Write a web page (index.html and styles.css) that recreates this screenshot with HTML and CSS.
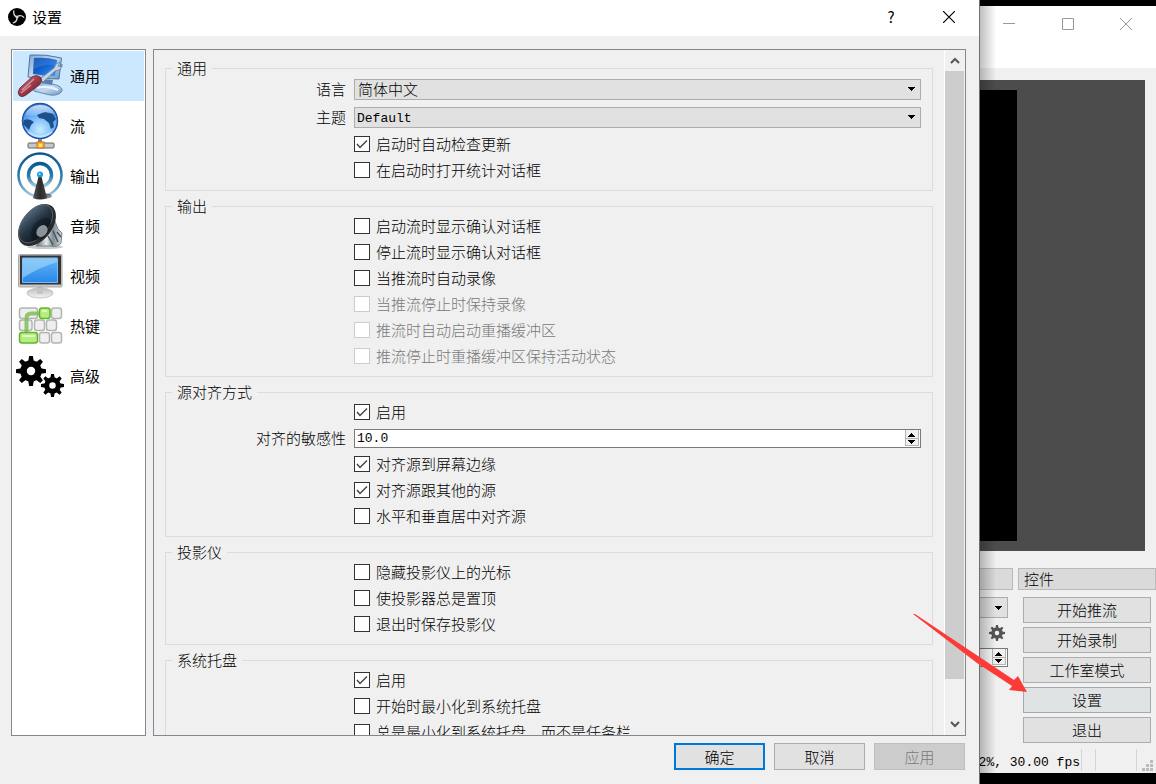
FILE: index.html
```html
<!DOCTYPE html>
<html lang="zh-CN">
<head>
    <meta charset="UTF-8">
    <meta name="viewport" content="width=device-width, initial-scale=1.0">
    <title>设置</title>
    <link rel="stylesheet" href="styles.css">
</head>
<body>
    <!-- shared symbols -->
    <svg class="symbols" aria-hidden="true">
        <symbol id="gear" viewBox="-16 -16 32 32">
            <circle r="8" fill="none" stroke="currentColor" stroke-width="7"/>
            <g fill="currentColor">
                <path d="M-3-10L-2-16H2L3-10ZM-3 10L-2 16H2L3 10Z"/>
                <path transform="rotate(45)" d="M-3-10L-2-16H2L3-10ZM-3 10L-2 16H2L3 10Z"/>
                <path transform="rotate(90)" d="M-3-10L-2-16H2L3-10ZM-3 10L-2 16H2L3 10Z"/>
                <path transform="rotate(135)" d="M-3-10L-2-16H2L3-10ZM-3 10L-2 16H2L3 10Z"/>
            </g>
        </symbol>
        <symbol id="spin" viewBox="0 0 16 17">
            <rect x="1" width="14" height="16" fill="#f0f0f0"/>
            <path d="M1.5 0V16M14.5 0V16M1 8.500H15M1 15.500H15" stroke="#b4b4b4"/>
            <path d="M7 3h1v1h1v1h1v1h1v1H4V6h1V5h1V4h1zM4 10h7v1h-1v1H9v1H8v1H7v-1H6v-1H5v-1H4z" fill="#000"/>
        </symbol>
    </svg>

    <div class="dialog">
        <header class="titlebar">
            <svg class="logo" viewBox="0 0 18 18">
                <circle cx="9" cy="9" r="9" fill="#000"/>
                <g fill="none" stroke="#d8d8d8" stroke-width="1.300" stroke-linecap="round">
                    <path d="M9 9Q5 7.500 5.800 3"/>
                    <path transform="rotate(120 9 9)" d="M9 9Q5 7.500 5.800 3"/>
                    <path transform="rotate(240 9 9)" d="M9 9Q5 7.500 5.800 3"/>
                </g>
                <circle cx="9" cy="9" r="1.500" fill="#d8d8d8"/>
            </svg>
            <h1 class="title">设置</h1>
            <button class="window-btn" type="button" aria-label="帮助">?</button>
            <button class="window-btn" type="button" aria-label="关闭">
                <svg width="12" height="12" viewBox="0 0 12 12"><path d="M0 0L12 12M12 0L0 12" stroke="#000" stroke-width="1.200"/></svg>
            </button>
        </header>

        <div class="dialog-body">
            <nav class="sidebar">
                <a href="#general" class="nav-item active">
                    <svg class="nav-icon" viewBox="0 0 48 48">
                        <defs>
                            <linearGradient id="screen1" x2="1" y2="1"><stop stop-color="#0a3f9e"/><stop offset=".5" stop-color="#1262cf"/><stop offset="1" stop-color="#3a9cf4"/></linearGradient>
                            <linearGradient id="case" x2="1" y2="1"><stop stop-color="#7fa6d0"/><stop offset=".5" stop-color="#c2d9ef"/><stop offset="1" stop-color="#6f93bd"/></linearGradient>
                            <linearGradient id="handle" x2="1" y2="1"><stop stop-color="#d98b93"/><stop offset=".5" stop-color="#9c3a48"/><stop offset="1" stop-color="#5e1c2a"/></linearGradient>
                        </defs>
                        <path d="M19 32Q30 29 36 32Q47 34 46 39Q43 44 34 43L18 39Q16 35 19 32Z" fill="url(#case)" stroke="#6386b0"/>
                        <path d="M21 36Q31 33 42 38" fill="none" stroke="#eaf4ff" stroke-width="2"/>
                        <path d="M26 27L37 28L36 33L26 31Z" fill="#5d7fab"/>
                        <path d="M14 3Q30 2 45.500 6L43 27Q28 27 12 25Z" fill="url(#case)" stroke="#4f74a3"/>
                        <path d="M18 6Q30 5 41 8L39 24Q28 24 17 22Z" fill="url(#screen1)"/>
                        <path d="M18 6Q30 5 41 8L40 13Q29 12 18 17Z" fill="#6db0f4" opacity=".25"/>
                        <path d="M24 27L38 16L40 12L44 10L42 14L45 15L46 12L46 15L43 18L39 19L27 30Z" fill="#c4d5e6" stroke="#6a86a6" stroke-width=".8"/>
                        <path d="M4 36L16 25Q21 22 25 26Q27 29 23 33L10 43Q5 46 3 43Q1 40 4 36Z" fill="url(#handle)" stroke="#792a38"/>
                        <path d="M6 38L18 27M5 41L15 33" stroke="#e6a5aa" stroke-width="1.500" opacity=".8"/>
                    </svg>
                    <span>通用</span>
                </a>
                <a href="#stream" class="nav-item">
                    <svg class="nav-icon" viewBox="0 0 48 48">
                        <defs>
                            <radialGradient id="globe" cx=".5" cy=".75" r=".8"><stop stop-color="#c8ecff"/><stop offset=".5" stop-color="#6fb6fa"/><stop offset="1" stop-color="#3474d8"/></radialGradient>
                            <linearGradient id="shine" y2="1" x2="0"><stop stop-color="#fff"/><stop offset="1" stop-color="#fff" stop-opacity=".2"/></linearGradient>
                        </defs>
                        <path d="M22 36h4v5h-4z" fill="#8a8a8a"/>
                        <rect x="12" y="41" width="26" height="5" rx="1" fill="#c5c7ca" stroke="#65676c"/>
                        <rect x="21" y="40" width="7" height="6" fill="#ffb82e" stroke="#d36f16"/>
                        <rect x="23" y="42" width="3" height="3" fill="#ffe680"/>
                        <circle cx="24" cy="19" r="17.500" fill="url(#globe)" stroke="#2356a8" stroke-width="1.500"/>
                        <path d="M8 18Q13 16 18 20L15 23L13 28L10 25L7 22ZM21 13L29 10L37 12L40 17L37 20L38 25L35 27L33 21L28 17L23 16Z" fill="#1d4f8a"/>
                        <path d="M9 13Q13 3 24 3Q35 3 39 12Q30 9 25 11Q18 15 9 13Z" fill="url(#shine)" opacity=".75"/>
                        <path d="M12 30Q24 39 36 30" fill="none" stroke="#d5f0ff" stroke-width="2" opacity=".7"/>
                    </svg>
                    <span>流</span>
                </a>
                <a href="#output" class="nav-item">
                    <svg class="nav-icon" viewBox="0 0 48 48">
                        <defs>
                            <linearGradient id="wave" x2="0" y2="1"><stop stop-color="#075a91"/><stop offset=".55" stop-color="#2f7dac"/><stop offset="1" stop-color="#a5cce2"/></linearGradient>
                            <linearGradient id="cone"><stop stop-color="#555"/><stop offset=".5" stop-color="#2b2b2b"/><stop offset="1" stop-color="#444"/></linearGradient>
                        </defs>
                        <circle cx="24" cy="23" r="21.500" fill="#fff" stroke="url(#wave)" stroke-width="2.500"/>
                        <circle cx="24" cy="23" r="11.500" fill="none" stroke="url(#wave)" stroke-width="3.500"/>
                        <ellipse cx="27" cy="44" rx="9" ry="3" fill="#222" opacity=".5"/>
                        <path d="M23 23h2L31 46Q24 49 17 46Z" fill="url(#cone)"/>
                        <circle cx="24" cy="22.500" r="3" fill="#1897e8"/>
                        <circle cx="23.500" cy="22" r="1.200" fill="#8bd5ff"/>
                    </svg>
                    <span>输出</span>
                </a>
                <a href="#audio" class="nav-item">
                    <svg class="nav-icon" viewBox="0 0 48 48">
                        <defs>
                            <linearGradient id="horn" x1="0" y1=".4" x2="1" y2=".7"><stop stop-color="#54697b"/><stop offset=".45" stop-color="#263746"/><stop offset="1" stop-color="#0d141c"/></linearGradient>
                            <linearGradient id="chrome"><stop stop-color="#59636a"/><stop offset=".4" stop-color="#e5eaec"/><stop offset=".65" stop-color="#7c8a90"/><stop offset="1" stop-color="#d3dcde"/></linearGradient>
                        </defs>
                        <ellipse cx="29" cy="45" rx="18" ry="2" fill="#777" opacity=".4"/>
                        <path d="M38 17L42 27L46 31L45 41Q42 46 34 44L20 44Z" fill="url(#chrome)" stroke="#788389"/>
                        <path d="M32 34L37 43M37 29L42 40M41 30L45 35" stroke="#46565d" stroke-width="1.500"/>
                        <ellipse cx="21" cy="23" rx="15" ry="24" transform="rotate(38 21 23)" fill="#2b2b2d"/>
                        <ellipse cx="19.500" cy="22" rx="13" ry="22" transform="rotate(38 20 22)" fill="url(#horn)" stroke="#67717a" stroke-width=".7"/>
                        <ellipse cx="25" cy="27" rx="8" ry="13" transform="rotate(38 25 27)" fill="#0b1118" opacity=".45"/>
                        <ellipse cx="26" cy="29" rx="5" ry="6.500" transform="rotate(38 26 29)" fill="#8b9299"/>
                    </svg>
                    <span>音频</span>
                </a>
                <a href="#video" class="nav-item">
                    <svg class="nav-icon" viewBox="0 0 48 48">
                        <defs>
                            <linearGradient id="screen2" x2="0" y2="1"><stop stop-color="#65b5f4"/><stop offset="1" stop-color="#2588ea"/></linearGradient>
                            <linearGradient id="stand" x2="0" y2="1"><stop stop-color="#bbb"/><stop offset="1" stop-color="#f4f4f4"/></linearGradient>
                        </defs>
                        <ellipse cx="24" cy="41" rx="13" ry="5" fill="url(#stand)" stroke="#c6c6c6"/>
                        <path d="M21 34h6v7Q24 43 21 41Z" fill="#c2c2c2"/>
                        <rect x="2.500" y="2.500" width="43.500" height="32.500" rx="1" fill="#c9c9c9" stroke="#aaa"/>
                        <rect x="4" y="3.500" width="41" height="29" fill="#343434"/>
                        <rect x="6.500" y="6" width="35" height="24.500" fill="url(#screen2)"/>
                        <path d="M6.500 6H41.500V10Q24 15 6.500 26Z" fill="#a6d9fb" opacity=".6"/>
                        <path d="M6.500 6H41.500V30.500H6.500Z" fill="none" stroke="#78bdfa"/>
                    </svg>
                    <span>视频</span>
                </a>
                <a href="#hotkeys" class="nav-item">
                    <svg class="nav-icon" viewBox="0 0 48 48">
                        <g fill="#eeefee" stroke="#b2b6b1" stroke-width="1.500">
                            <rect x="3.500" y="6" width="18" height="10.500" rx="2.500"/>
                            <rect x="35.500" y="6" width="10" height="10.500" rx="2.500"/>
                            <rect x="3.500" y="18" width="12.500" height="10.500" rx="2.500"/>
                            <rect x="18.500" y="18" width="10" height="10.500" rx="2.500"/>
                            <rect x="30.500" y="18" width="10" height="10.500" rx="2.500"/>
                            <rect x="23.500" y="30.500" width="10" height="10.500" rx="2.500"/>
                            <rect x="35.500" y="30.500" width="10" height="10.500" rx="2.500"/>
                        </g>
                        <path d="M10.500 31V16Q10.500 11.500 15 11.500H24" fill="none" stroke="#82bd59" stroke-width="4" opacity=".85"/>
                        <g fill="#b5ed80" stroke="#63b62c" stroke-width="1.500">
                            <rect x="23.500" y="6" width="10.500" height="10.500" rx="2.500"/>
                            <rect x="3.500" y="30.500" width="18" height="10.500" rx="2.500"/>
                        </g>
                        <path d="M26 9h5M6 34h13" stroke="#e3ffc8" stroke-width="2"/>
                    </svg>
                    <span>热键</span>
                </a>
                <a href="#advanced" class="nav-item">
                    <svg class="nav-icon" viewBox="0 0 48 48">
                        <use href="#gear" x="0" y="4" width="30" height="30"/>
                        <use href="#gear" x="25" y="22" width="23" height="23"/>
                    </svg>
                    <span>高级</span>
                </a>
            </nav>

            <main class="panel">
                <form class="settings" id="settings-form">
                    <fieldset>
                        <legend>通用</legend>
                        <div class="row row-select">
                            <label for="language">语言</label>
                            <select id="language"><option>简体中文</option></select>
                        </div>
                        <div class="row row-select">
                            <label for="theme">主题</label>
                            <select id="theme" class="latin"><option>Default</option></select>
                        </div>
                        <label class="check"><input type="checkbox" checked>启动时自动检查更新</label>
                        <label class="check"><input type="checkbox">在启动时打开统计对话框</label>
                    </fieldset>
                    <fieldset>
                        <legend>输出</legend>
                        <label class="check"><input type="checkbox">启动流时显示确认对话框</label>
                        <label class="check"><input type="checkbox">停止流时显示确认对话框</label>
                        <label class="check"><input type="checkbox">当推流时自动录像</label>
                        <label class="check disabled"><input type="checkbox" disabled>当推流停止时保持录像</label>
                        <label class="check disabled"><input type="checkbox" disabled>推流时自动启动重播缓冲区</label>
                        <label class="check disabled"><input type="checkbox" disabled>推流停止时重播缓冲区保持活动状态</label>
                    </fieldset>
                    <fieldset>
                        <legend>源对齐方式</legend>
                        <label class="check"><input type="checkbox" checked>启用</label>
                        <div class="row">
                            <label for="sensitivity">对齐的敏感性</label>
                            <div class="spinbox">
                                <input type="text" id="sensitivity" class="latin" value="10.0">
                                <svg width="16" height="17"><use href="#spin"/></svg>
                            </div>
                        </div>
                        <label class="check"><input type="checkbox" checked>对齐源到屏幕边缘</label>
                        <label class="check"><input type="checkbox" checked>对齐源跟其他的源</label>
                        <label class="check"><input type="checkbox">水平和垂直居中对齐源</label>
                    </fieldset>
                    <fieldset>
                        <legend>投影仪</legend>
                        <label class="check"><input type="checkbox">隐藏投影仪上的光标</label>
                        <label class="check"><input type="checkbox">使投影器总是置顶</label>
                        <label class="check"><input type="checkbox">退出时保存投影仪</label>
                    </fieldset>
                    <fieldset>
                        <legend>系统托盘</legend>
                        <label class="check"><input type="checkbox" checked>启用</label>
                        <label class="check"><input type="checkbox">开始时最小化到系统托盘</label>
                        <label class="check"><input type="checkbox">总是最小化到系统托盘，而不是任务栏</label>
                    </fieldset>
                </form>
                <div class="scrollbar">
                    <button type="button" class="scroll-btn" aria-label="向上">
                        <svg width="10" height="7" viewBox="0 0 10 7"><path d="M1 6L5 2L9 6" fill="none" stroke="#555" stroke-width="2"/></svg>
                    </button>
                    <div class="scroll-track"><div class="scroll-thumb"></div></div>
                    <button type="button" class="scroll-btn" aria-label="向下">
                        <svg width="10" height="7" viewBox="0 0 10 7"><path d="M1 1L5 5L9 1" fill="none" stroke="#555" stroke-width="2"/></svg>
                    </button>
                </div>
            </main>
        </div>

        <footer class="dialog-footer">
            <button type="submit" form="settings-form" class="btn btn-default">确定</button>
            <button type="button" class="btn">取消</button>
            <button type="button" class="btn" disabled>应用</button>
        </footer>
    </div>

    <div class="main-window">
        <header class="main-titlebar">
            <button type="button" aria-label="最小化"><svg width="12" height="12"><path d="M0 5.500H12" stroke="#999"/></svg></button>
            <button type="button" aria-label="最大化"><svg width="12" height="12"><path d="M.5.5H11.500V11.500H.5Z" fill="none" stroke="#999"/></svg></button>
            <button type="button" aria-label="关闭"><svg width="12" height="12"><path d="M0 0L12 12M12 0L0 12" stroke="#999"/></svg></button>
        </header>
        <div class="preview"><div class="canvas"></div></div>
        <div class="docks">
            <section class="dock">
                <div class="dock-title"></div>
                <div class="transition">
                    <select aria-label="转场"><option></option></select>
                    <button type="button" class="gear-btn" aria-label="转场属性"><svg width="16" height="16"><use href="#gear"/></svg></button>
                    <div class="spinbox">
                        <input type="text" aria-label="时长">
                        <svg width="16" height="17"><use href="#spin"/></svg>
                    </div>
                </div>
            </section>
            <section class="dock dock-controls">
                <h2 class="dock-title">控件</h2>
                <div class="control-list">
                    <button type="button" class="btn">开始推流</button>
                    <button type="button" class="btn">开始录制</button>
                    <button type="button" class="btn">工作室模式</button>
                    <div class="pointed">
                        <button type="button" class="btn btn-hover">设置</button>
                        <svg class="arrow" width="114" height="78" viewBox="0 0 114 78"><path d="M0 0H2L101 66L105 62L114 78L96 76L99 72L64 49Q30 23 0 0Z" fill="#fc3b39"/></svg>
                    </div>
                    <button type="button" class="btn">退出</button>
                </div>
            </section>
        </div>
        <footer class="statusbar latin">
            <span class="stats">2%, 30.00 fps</span>
            <span class="cell"></span>
            <span class="cell cell-wide"></span>
            <svg class="grip" width="11" height="11" viewBox="0 0 11 11"><path d="M8 0h3v3H8zM4 4h3v3H4zM8 4h3v3H8zM0 8h3v3H0zM4 8h3v3H4zM8 8h3v3H8z" fill="#bbb"/></svg>
        </footer>
    </div>
</body>
</html>
```

FILE: styles.css
```css
:root {
    --bg: #f0f0f0;
    --button: #e1e1e1;
    --border: #adadad;
    --frame: #828790;
    --group: #dcdcdc;
    --accent: #0078d7;
}

* {
    margin: 0;
    padding: 0;
    box-sizing: border-box;
}

body {
    font-family: "Noto Sans CJK SC", sans-serif;
    font-size: 15px;
    font-weight: 300;
    line-height: 20px;
    color: #000;
    background: #000;
    height: 100vh;
    display: flex;
    overflow: hidden;
}

button, input, select {
    font: inherit;
    color: inherit;
}

button {
    border: none;
    background: none;
}

svg {
    display: block;
    flex: none;
}

.symbols {
    position: absolute;
    width: 0;
    height: 0;
}

.latin {
    font-family: "Liberation Mono", monospace;
    font-size: 13px;
    font-weight: 400;
}

/* settings dialog */
.dialog {
    flex: 1;
    min-width: 0;
    display: flex;
    flex-direction: column;
    background: var(--bg);
    border-right: 1px solid #707070;
}

.titlebar {
    height: 36px;
    display: flex;
    align-items: center;
    padding: 0 1px 2px 8px;
    background: #fff;
}

.logo {
    width: 18px;
    height: 18px;
}

.title {
    flex: 1;
    margin-left: 6px;
    font-size: 15px;
    font-weight: 400;
}

.window-btn {
    width: 58px;
    height: 32px;
    display: flex;
    align-items: center;
    justify-content: center;
    font-weight: 400;
}

.dialog-body {
    flex: 1;
    min-height: 0;
    display: flex;
    gap: 7px;
    padding: 13px 13px 0 11px;
}

.sidebar {
    width: 135px;
    flex: none;
    padding: 1px;
    background: #fff;
    border: 1px solid var(--frame);
    font-weight: 400;
}

.nav-item {
    display: flex;
    align-items: center;
    gap: 6px;
    height: 50px;
    padding-left: 3px;
    color: #000;
    text-decoration: none;
}

.nav-item.active {
    background: #cce8ff;
}

.nav-icon {
    width: 48px;
    height: 48px;
}

.panel {
    flex: 1;
    min-width: 0;
    display: flex;
    border: 1px solid var(--frame);
    overflow: hidden;
}

.settings {
    flex: 1;
    min-width: 0;
    padding: 12px 11px 0;
}

fieldset {
    border: 1px solid var(--group);
    padding: 0 11px 7px 0;
    margin-bottom: 9px;
}

legend {
    margin-left: 6px;
    padding: 0 5px;
    line-height: 12px;
    height: 13px;
}

.row {
    display: grid;
    grid-template-columns: 180px 1fr;
    column-gap: 8px;
    align-items: center;
    height: 26px;
}

.row-select {
    height: 28px;
}

.row label {
    text-align: right;
}

select {
    appearance: none;
    width: 100%;
    height: 21px;
    padding: 0 20px 0 3px;
    line-height: 18px;
    border: 1px solid var(--border);
    border-radius: 0;
    background: var(--button) url("data:image/svg+xml,%3Csvg xmlns='http://www.w3.org/2000/svg' width='7' height='4'%3E%3Cpath d='M0 0h7v1H6v1H5v1H4v1H3V3H2V2H1V1H0z'/%3E%3C/svg%3E") no-repeat right 5px center;
}

select.latin {
    padding: 2px 20px 0 2px;
}

.spinbox {
    display: flex;
    height: 19px;
    background: #fff;
    border: 1px solid #7a7a7a;
}

.spinbox input {
    flex: 1;
    min-width: 0;
    padding: 2px 2px 0;
    border: none;
    background: none;
}

.check {
    display: flex;
    align-items: center;
    gap: 6px;
    height: 26px;
    padding-left: 188px;
}

.check input {
    appearance: none;
    flex: none;
    width: 16px;
    height: 16px;
    border: 1px solid #333;
    background: #fff;
}

.check input:checked {
    background: #fff url("data:image/svg+xml,%3Csvg xmlns='http://www.w3.org/2000/svg' width='14' height='14'%3E%3Cpath d='M2 7L5 10.500L12 3.500' fill='none' stroke='%23444' stroke-width='1.500'/%3E%3C/svg%3E") no-repeat center;
}

.check.disabled {
    color: #787878;
}

.check.disabled input {
    border-color: #ccc;
}

.scrollbar {
    width: 21px;
    flex: none;
    display: flex;
    flex-direction: column;
    border-left: 1px solid #fff;
    padding-right: 1px;
}

.scroll-btn {
    height: 21px;
    display: flex;
    align-items: center;
    justify-content: center;
}

.scroll-track {
    flex: 1;
}

.scroll-thumb {
    height: calc(100% - 35px);
    background: #cdcdcd;
}

.dialog-footer {
    display: flex;
    justify-content: flex-end;
    gap: 9px;
    padding: 7px 14px 14px 11px;
}

.btn {
    width: 91px;
    height: 27px;
    line-height: 20px;
    background: var(--button);
    border: 1px solid var(--border);
}

.btn-default {
    border: 2px solid var(--accent);
}

.btn:disabled {
    color: #787878;
    background: #ccc;
    border-color: #bfbfbf;
}

/* main window behind the dialog */
.main-window {
    position: relative;
    width: 176px;
    flex: none;
    display: flex;
    flex-direction: column;
    margin: 6px 0 11px;
    background: var(--bg);
}

.main-window::before {
    content: "";
    position: absolute;
    inset: 0 auto 0 0;
    width: 16px;
    background: linear-gradient(to right, rgba(0, 0, 0, 0.25), transparent);
    z-index: 1;
}

.main-titlebar {
    height: 62px;
    display: flex;
    align-items: flex-start;
    justify-content: space-between;
    padding: 12px 24px 0 23px;
    background: #fff;
}

.preview {
    flex: 1;
    margin: 12px 11px 0 0;
    padding: 10px 0;
    background: #4c4c4c;
}

.canvas {
    width: 37px;
    height: 100%;
    background: #000;
}

.docks {
    display: flex;
    gap: 5px;
    padding-top: 17px;
}

.dock {
    width: 33px;
    flex: none;
}

.dock-controls {
    flex: 1;
}

.dock-title {
    height: 22px;
    padding-left: 5px;
    font-size: 15px;
    font-weight: 300;
    line-height: 20px;
    background: #dadada;
    border: 1px solid #b9b9b9;
}

.dock:first-child .dock-title,
.transition select,
.transition .spinbox {
    border-left: none;
}

.transition {
    display: flex;
    flex-direction: column;
    gap: 7px;
    padding: 7px 5px 0 0;
}

.transition select {
    padding: 0;
}

.gear-btn {
    align-self: flex-end;
    margin-right: 3px;
    height: 16px;
    color: #555;
}

.control-list {
    display: flex;
    flex-direction: column;
    gap: 4px;
    padding: 7px 5px 3px;
}

.control-list .btn {
    width: 100%;
    height: 26px;
}

.control-list .btn-hover {
    background: #dfe3e3;
    border-color: #a3a9b1;
}

.pointed {
    position: relative;
    height: 26px;
}

.arrow {
    position: absolute;
    right: calc(100% - 4px);
    top: -73px;
    z-index: 2;
}

.statusbar {
    display: flex;
    height: 27px;
    padding: 3px 3px 2px 0;
}

.stats {
    flex: 1;
    min-width: 0;
    display: flex;
    justify-content: flex-end;
    overflow: hidden;
    padding: 2px 1px 0 0;
    white-space: nowrap;
    line-height: 24px;
    border-right: 1px solid #d5d5d5;
}

.cell {
    width: 14px;
    border-right: 1px solid #d5d5d5;
}

.cell-wide {
    width: 41px;
}

.grip {
    align-self: flex-end;
    margin-left: 5px;
}
```
